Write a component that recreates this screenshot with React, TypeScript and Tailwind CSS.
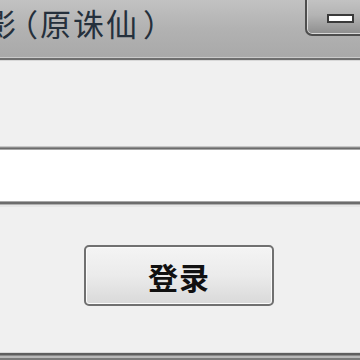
export default function App() {
  const cjk = { fontFamily: '"Noto Sans CJK SC", "Noto Sans", sans-serif' };
  return (
    <div className="w-[360px] h-[360px] overflow-hidden bg-[#f0f0f0] flex flex-col">
      {/* title bar */}
      <div className="relative h-[57px] shrink-0 bg-gradient-to-b from-[#c2c2c2] via-[#b2b2b2] to-[#a9a9a9] flex items-start">
        <div
          className="flex mt-[1px] text-[31px] leading-[44px] text-[#25303c] whitespace-nowrap"
          style={cjk}
        >
          <span className="ml-[-15px]">影</span>
          <span className="ml-[-9px]">（</span>
          <span className="ml-[2px] tracking-[2px]">原诛仙</span>
          <span className="ml-[4px]">）</span>
        </div>
        <div className="absolute top-[-6px] right-[-10px] w-[65px] h-[42px] rounded-[7px] border-2 border-[#4e4e4e] bg-gradient-to-b from-[#c6c6c6] via-[#b4b4b4] to-[#8e8e8e] shadow-[inset_0_0_0_1px_#d8d8d8]">
          <div className="absolute left-[20px] top-[18px] w-[27px] h-[9px] border-2 border-[#3a3a3a] bg-white" />
        </div>
      </div>
      <div className="h-[1px] bg-[#cacaca] shrink-0" />
      <div className="h-[2px] bg-[#6e6e6e] shrink-0" />
      <div className="h-[1px] bg-[#d8d8d8] shrink-0" />
      <div className="h-[85px] shrink-0" />
      {/* text input */}
      <div className="shrink-0 flex flex-col">
        <div className="h-[1px] bg-[#c8c8c8]" />
        <div className="h-[1px] bg-[#8c8c8c]" />
        <div className="h-[1px] bg-[#6c6c6c]" />
        <div className="h-[1px] bg-[#a8a8a8]" />
        <div className="h-[51px] bg-white" />
        <div className="h-[1px] bg-[#a8a8a8]" />
        <div className="h-[2px] bg-[#6c6c6c]" />
        <div className="h-[1px] bg-[#b0b0b0]" />
        <div className="h-[2px] bg-[#e6e6e6]" />
      </div>
      <div className="h-[38px] shrink-0" />
      {/* button */}
      <div className="shrink-0 flex">
        <div className="ml-[84px] w-[190px] h-[61px] rounded-[5px] border-2 border-[#707070] bg-gradient-to-b from-[#f4f4f4] via-[#ebebeb] to-[#d9d9d9] shadow-[inset_0_0_0_1px_#fbfbfb] flex items-center justify-center">
          <span className="text-[30px] font-bold text-[#111] leading-none tracking-[1px]" style={cjk}>
            登录
          </span>
        </div>
      </div>
      <div className="flex-1" />
      <div className="shrink-0 flex flex-col">
        <div className="h-[1px] bg-[#d8d8d8]" />
        <div className="h-[2px] bg-[#5e5e5e]" />
        <div className="h-[1px] bg-[#8a8a8a]" />
        <div className="h-[2px] bg-[#b8b8b8]" />
        <div className="h-[2px] bg-[#7a7a7a]" />
      </div>
    </div>
  );
}
